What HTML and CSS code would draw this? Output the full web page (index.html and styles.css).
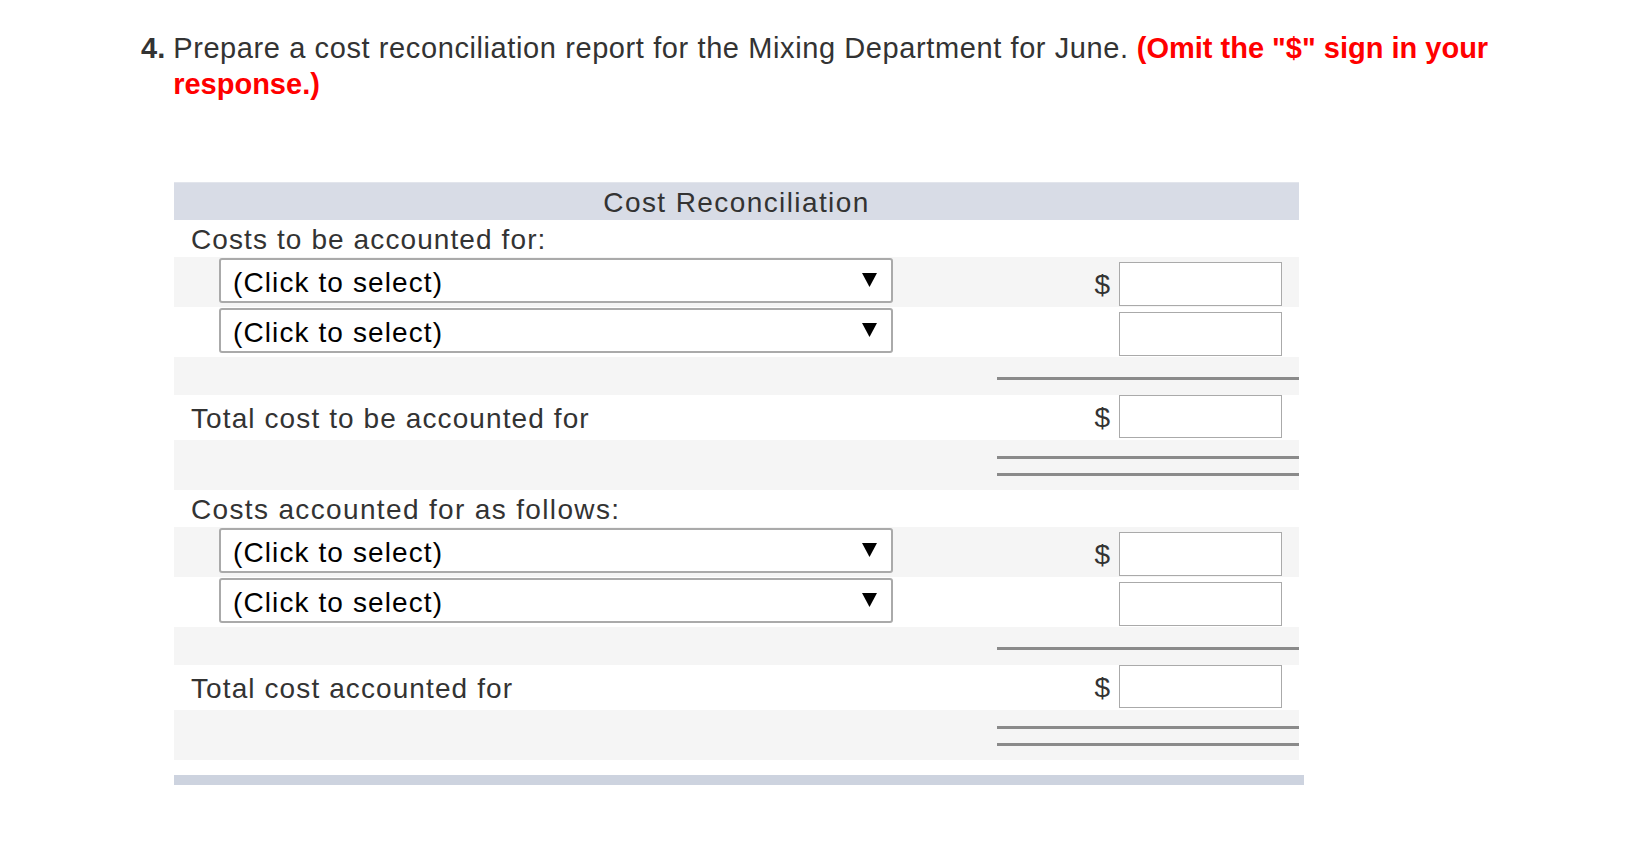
FILE: index.html
```html
<!DOCTYPE html>
<html>
<head>
<meta charset="utf-8">
<link rel="stylesheet" href="styles.css">
</head>
<body>
<div class="question">
  <span class="qnum">4.</span>
  <p class="qtext"><span class="plain">Prepare a cost reconciliation report for the Mixing Department for June.</span> <span class="note">(Omit the "$" sign in your response.)</span></p>
</div>

<div class="recon">
  <div class="head">Cost Reconciliation</div>

  <div class="row label-row"><div class="label">Costs to be accounted for:</div></div>

  <div class="row sel-row gray">
    <div class="left"><div class="select"><span class="seltext">(Click to select)</span><svg class="arrow" width="15" height="14" viewBox="0 0 15 14"><polygon points="0,0 15,0 7.5,14" fill="#000"/></svg></div></div>
    <div class="amt"><span class="dollar">$</span><span class="input"></span></div>
  </div>
  <div class="row sel-row">
    <div class="left"><div class="select"><span class="seltext">(Click to select)</span><svg class="arrow" width="15" height="14" viewBox="0 0 15 14"><polygon points="0,0 15,0 7.5,14" fill="#000"/></svg></div></div>
    <div class="amt"><span class="dollar"></span><span class="input"></span></div>
  </div>
  <div class="row line-row gray">
    <div class="left"></div>
    <div class="amt rules single"><span class="rule"></span></div>
  </div>
  <div class="row total-row">
    <div class="left"><div class="label">Total cost to be accounted for</div></div>
    <div class="amt"><span class="dollar">$</span><span class="input"></span></div>
  </div>
  <div class="row dbl-row gray">
    <div class="left"></div>
    <div class="amt rules double"><span class="rule"></span><span class="rule"></span></div>
  </div>

  <div class="row label-row"><div class="label wide">Costs accounted for as follows:</div></div>

  <div class="row sel-row gray">
    <div class="left"><div class="select"><span class="seltext">(Click to select)</span><svg class="arrow" width="15" height="14" viewBox="0 0 15 14"><polygon points="0,0 15,0 7.5,14" fill="#000"/></svg></div></div>
    <div class="amt"><span class="dollar">$</span><span class="input"></span></div>
  </div>
  <div class="row sel-row">
    <div class="left"><div class="select"><span class="seltext">(Click to select)</span><svg class="arrow" width="15" height="14" viewBox="0 0 15 14"><polygon points="0,0 15,0 7.5,14" fill="#000"/></svg></div></div>
    <div class="amt"><span class="dollar"></span><span class="input"></span></div>
  </div>
  <div class="row line-row gray">
    <div class="left"></div>
    <div class="amt rules single"><span class="rule"></span></div>
  </div>
  <div class="row total-row">
    <div class="left"><div class="label">Total cost accounted for</div></div>
    <div class="amt"><span class="dollar">$</span><span class="input"></span></div>
  </div>
  <div class="row dbl-row gray">
    <div class="left"></div>
    <div class="amt rules double"><span class="rule"></span><span class="rule"></span></div>
  </div>
</div>
<div class="footbar"></div>
</body>
</html>
```
FILE: styles.css
```css
html, body {
  margin: 0;
  padding: 0;
  background: #ffffff;
}
body {
  font-family: "Liberation Sans", Arial, sans-serif;
  color: #333333;
}
.question {
  display: flex;
  align-items: flex-start;
  gap: 8px;
  margin: 30px 0 0 141px;
  width: 1400px;
  font-size: 29px;
  line-height: 36px;
}
.qnum {
  font-weight: bold;
  color: #333333;
}
.qtext {
  margin: 0;
  flex: 1;
}
.plain {
  letter-spacing: 0.6px;
}
.note {
  color: #ff0000;
  font-weight: bold;
}
.recon {
  margin: 80px 0 0 174px;
  width: 1125px;
  font-size: 28px;
  letter-spacing: 1.1px;
}
.head {
  height: 38px;
  background: #d8dce6;
  border-top: 1px solid #e2e5ec;
  box-sizing: border-box;
  display: flex;
  align-items: center;
  justify-content: center;
  padding-top: 2px;
  color: #333333;
  letter-spacing: 1.4px;
}
.row {
  display: flex;
  background: #ffffff;
}
.row.gray {
  background: #f5f5f5;
}
.left {
  width: 823px;
  display: flex;
  align-items: center;
}
.amt {
  width: 302px;
  display: flex;
  align-items: center;
}
.label-row {
  height: 37px;
  align-items: center;
}
.label {
  padding: 3px 0 0 17px;
}
.label.wide {
  letter-spacing: 1.35px;
}
.sel-row {
  height: 50px;
}
.sel-row .left {
  align-items: flex-start;
}
.select {
  margin: 1px 0 0 45px;
  width: 674px;
  height: 45px;
  box-sizing: border-box;
  border: 2px solid #aaaaaa;
  border-radius: 3px;
  background: #ffffff;
  color: #000000;
  display: flex;
  align-items: center;
  justify-content: space-between;
  padding: 0 14px 0 12px;
}
.seltext {
  padding-top: 5px;
}
.arrow {
  display: block;
  margin-top: -2px;
}
.sel-row .amt {
  align-items: flex-start;
  padding-top: 5px;
  box-sizing: border-box;
}
.dollar {
  width: 122px;
  text-align: right;
  padding-right: 9px;
  box-sizing: border-box;
  font-size: 28px;
  letter-spacing: 0;
  line-height: 46px;
}
.input {
  width: 163px;
  height: 44px;
  box-sizing: border-box;
  border: 1px solid #aaaaaa;
  background: #ffffff;
  display: block;
}
.total-row {
  height: 45px;
}
.total-row .left {
  align-items: center;
}
.total-row .label {
  padding-top: 2px;
}
.total-row .amt {
  align-items: flex-start;
}
.total-row .input {
  height: 43px;
}
.total-row .dollar {
  line-height: 45px;
}
.line-row {
  height: 38px;
}
.dbl-row {
  height: 50px;
}
.rules {
  flex-direction: column;
  align-items: stretch;
  justify-content: flex-start;
}
.rule {
  display: block;
  height: 3px;
  background: #8a8a8a;
}
.single .rule {
  margin-top: 20px;
}
.double .rule:first-child {
  margin-top: 16px;
}
.double .rule + .rule {
  margin-top: 14px;
}
.footbar {
  margin: 15px 0 0 174px;
  width: 1130px;
  height: 10px;
  background: #cdd3df;
}
```
